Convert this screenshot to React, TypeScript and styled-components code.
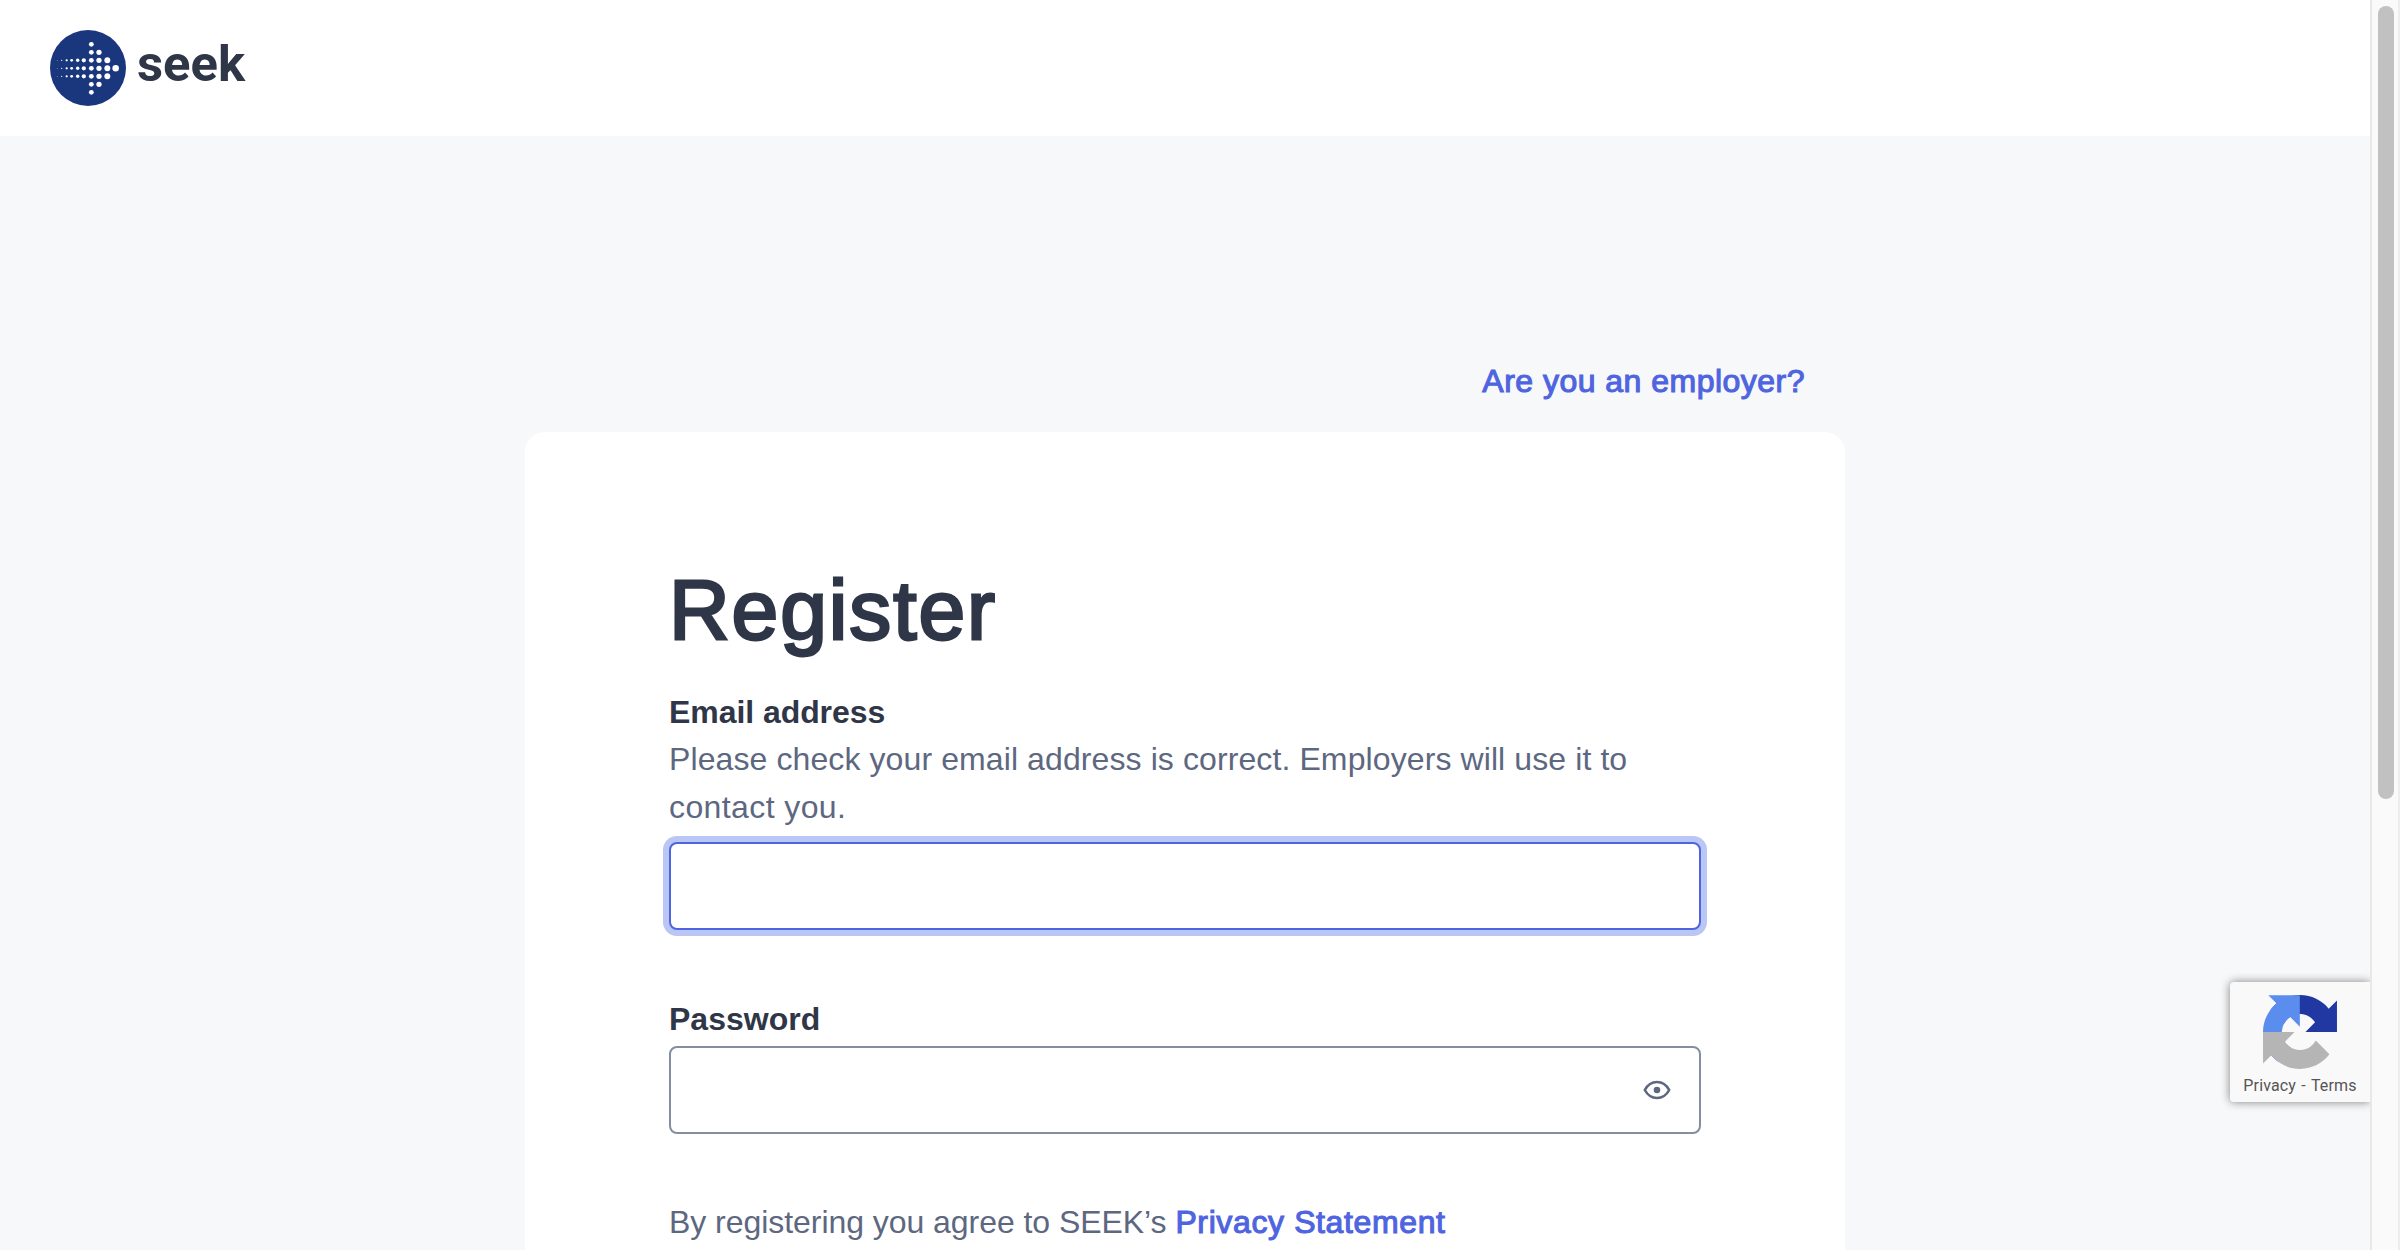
import React from "react";
import styled, { createGlobalStyle } from "styled-components";

const GlobalStyle = createGlobalStyle`
  * { box-sizing: border-box; }
  html, body { margin: 0; padding: 0; overflow: hidden; }
  body { font-family: "Liberation Sans", Arial, Helvetica, sans-serif; color: #2f3647; }
`;

const Window = styled.div`
  display: flex;
  height: 1250px;
  width: 2400px;
  overflow: hidden;
`;

const Page = styled.div`
  position: relative;
  flex: 1;
  height: 100%;
  overflow: hidden;
  background: #f7f8fa;
`;

const Scrollbar = styled.div`
  width: 30px;
  height: 100%;
  padding: 6px 4px 0 6px;
  background: #fafafa;
  border-left: 2px solid #e8e8e8;
  border-right: 2px solid #ededed;
`;

const Thumb = styled.div`
  width: 16px;
  height: 793px;
  border-radius: 8px;
  background: #c1c1c1;
`;

const Header = styled.header`
  display: flex;
  align-items: center;
  height: 136px;
  padding-left: 50px;
  background: #fff;
`;

const Logo = styled.svg`
  display: block;
  width: 200px;
  height: 76px;
  overflow: visible;
`;

const Main = styled.main`
  width: 1320px;
  margin: 221px auto 0;
`;

const EmployerRow = styled.div`
  display: flex;
  justify-content: flex-end;
  height: 75px;
  padding-right: 40px;
`;

const Link = styled.a<{ $spacing: number }>`
  font-size: 32px;
  line-height: 48px;
  color: #4f64e0;
  letter-spacing: ${(p) => p.$spacing}px;
  -webkit-text-stroke: 1.1px #4f64e0;
  text-decoration: none;
  white-space: nowrap;
`;

const Card = styled.section`
  height: 1000px;
  padding: 130px 144px 0;
  border-radius: 20px;
  background: #fff;
`;

const Title = styled.h1`
  margin: 0 0 30px;
  font-size: 84px;
  line-height: 96px;
  font-weight: 400;
  color: #2f3647;
  letter-spacing: 1.9px;
  -webkit-text-stroke: 2.8px #2f3647;
`;

const Field = styled.div<{ $gap: number }>`
  display: flex;
  flex-direction: column;
  margin-bottom: ${(p) => p.$gap}px;
`;

const Label = styled.label<{ $height: number; $spacing: number }>`
  font-size: 32px;
  line-height: 48px;
  height: ${(p) => p.$height}px;
  font-weight: 700;
  letter-spacing: ${(p) => p.$spacing}px;
`;

const Hint = styled.p<{ $gap?: number; $spacing: number }>`
  margin: 0 0 ${(p) => p.$gap ?? 0}px;
  font-size: 32px;
  line-height: 48px;
  color: #5d677f;
  letter-spacing: ${(p) => p.$spacing}px;
  white-space: nowrap;
`;

const HintEnd = styled.span`
  letter-spacing: 0.4px;
`;

const InputBox = styled.div<{ $focused?: boolean }>`
  display: flex;
  align-items: center;
  justify-content: flex-end;
  height: 88px;
  padding-right: 28px;
  border: 2px solid ${(p) => (p.$focused ? "#4f64e0" : "#848ea3")};
  border-radius: 8px;
  background: #fff;
  box-shadow: ${(p) => (p.$focused ? "0 0 0 6px #bac6f3" : "none")};
`;

const TextInput = styled.input`
  flex: 1;
  min-width: 0;
  height: 100%;
  padding: 0 24px;
  border: 0;
  outline: 0;
  background: transparent;
  font: inherit;
  font-size: 32px;
`;

const EyeIcon = styled.svg`
  width: 28px;
  height: 20px;
`;

const Badge = styled.aside`
  position: absolute;
  top: 982px;
  right: 0;
  width: 140px;
  height: 120px;
  padding-top: 13px;
  display: flex;
  flex-direction: column;
  align-items: center;
  border-radius: 4px 0 0 4px;
  background: #f9f9f9;
  box-shadow: 0 0 10px #808080;
`;

const BadgeLogo = styled.svg`
  width: 74px;
  height: 74px;
`;

const BadgeText = styled.div`
  margin-top: 7px;
  font-family: Roboto, sans-serif;
  font-size: 16px;
  line-height: 20px;
  letter-spacing: 0.15px;
  word-spacing: 1.2px;
  color: #555;
  white-space: pre;
`;

const tail: [number, number][] = [
  [82, 1], [95, 2], [110, 3.4], [125, 4.3], [143, 5.2], [161.5, 6.2],
];
const head: [number, number, number][] = [
  [184, 7.2, 3], [207, 7.9, 2], [232, 8.9, 1], [257, 9.8, 0],
];

const dots = [
  ...tail.flatMap(([x, r]) => [-1, 0, 1].map((k) => ({ x, r, y: 175 + k * 24 }))),
  ...head.flatMap(([x, r, n]) =>
    Array.from({ length: n * 2 + 1 }, (_, i) => ({ x, r, y: 175 + (i - n) * 24 }))
  ),
];

export default function App() {
  return (
    <Window>
      <GlobalStyle />
      <Page>
        <Header>
          <Logo viewBox="60 60 600 228">
            <circle cx="174" cy="174" r="114" fill="#1a367c" />
            {dots.map((d, i) => (
              <circle key={i} cx={d.x} cy={d.y} r={d.r} fill="#fff" />
            ))}
            <text
              x="321"
              y="213"
              fontFamily="Roboto, Noto Sans, sans-serif"
              fontWeight="700"
              fontSize="151"
              fill="#2f3647"
              textLength="324"
              lengthAdjust="spacingAndGlyphs"
            >
              seek
            </text>
          </Logo>
        </Header>
        <Main>
          <EmployerRow>
            <Link $spacing={0.48}>Are you an employer?</Link>
          </EmployerRow>
          <Card>
            <Title>Register</Title>
            <Field $gap={65}>
              <Label $height={47} $spacing={-0.06}>Email address</Label>
              <Hint $gap={11} $spacing={0.1}>
                Please check your email address is correct. Employers will use it to
                <br />
                <HintEnd>contact you.</HintEnd>
              </Hint>
              <InputBox $focused>
                <TextInput />
              </InputBox>
            </Field>
            <Field $gap={64}>
              <Label $height={51} $spacing={0}>Password</Label>
              <InputBox>
                <TextInput type="password" />
                <EyeIcon viewBox="0 0 28 20" fill="none">
                  <path
                    d="M1.8 10C4.6 4.8 9 2 14 2S23.4 4.8 26.2 10C23.4 15.2 19 18 14 18S4.6 15.2 1.8 10Z"
                    stroke="#5d677f"
                    strokeWidth="2.6"
                    strokeLinejoin="round"
                  />
                  <circle cx="14" cy="10" r="3.3" fill="#5d677f" />
                </EyeIcon>
              </InputBox>
            </Field>
            <Hint $spacing={-0.05}>
              By registering you agree to SEEK’s <Link $spacing={0.62}>Privacy Statement</Link>
            </Hint>
          </Card>
        </Main>
        <Badge>
          <BadgeLogo viewBox="0 0 64 64">
            <path fill="#2138a3" d="M64 31.955l-.033-1.37V4.687l-7.16 7.16C50.948 4.674 42.033.093 32.05.093c-10.4 0-19.622 4.96-25.458 12.64l11.736 11.86a15.55 15.55 0 0 1 4.754-5.334c2.05-1.6 4.952-2.906 8.968-2.906.485 0 .86.057 1.135.163 4.976.393 9.288 3.14 11.828 7.124l-8.307 8.307L64 31.953" />
            <path fill="#5a8dee" d="M31.862.094l-1.37.033H4.594l7.16 7.16C4.58 13.147 0 22.06 0 32.046c0 10.4 4.96 19.622 12.64 25.458L24.5 45.768a15.55 15.55 0 0 1-5.334-4.754c-1.6-2.05-2.906-4.952-2.906-8.968 0-.485.057-.86.163-1.135.393-4.976 3.14-9.288 7.124-11.828l8.307 8.307L31.86.095" />
            <path fill="#b5b5b5" d="M.001 32.045l.033 1.37v25.898l7.16-7.16c5.86 7.173 14.774 11.754 24.76 11.754 10.4 0 19.622-4.96 25.458-12.64l-11.736-11.86a15.55 15.55 0 0 1-4.754 5.334c-2.05 1.6-4.952 2.906-8.968 2.906-.485 0-.86-.057-1.135-.163-4.976-.393-9.288-3.14-11.828-7.124l8.307-8.307c-10.522.04-22.4.066-27.295-.005" />
          </BadgeLogo>
          <BadgeText>Privacy - Terms</BadgeText>
        </Badge>
      </Page>
      <Scrollbar>
        <Thumb />
      </Scrollbar>
    </Window>
  );
}
